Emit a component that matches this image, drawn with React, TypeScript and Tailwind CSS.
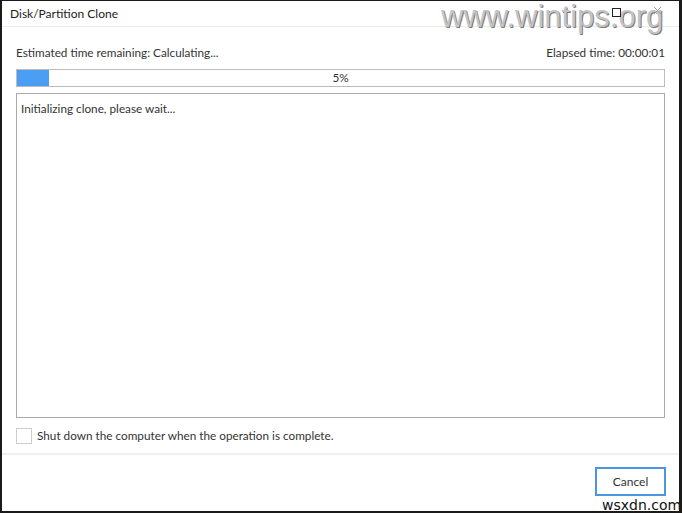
import React from 'react';

export default function App() {
    return (
        <div
            className="relative w-[682px] h-[513px] bg-white border-l-2 border-r-[3px] border-b-2 border-t border-[#1a1a1a] flex flex-col text-[#333] overflow-hidden"
            style={{ fontFamily: 'Lato, "Noto Sans", sans-serif' }}
        >
            {/* Title bar */}
            <div className="h-[26px] flex items-center pl-2 border-b border-[#ececec] text-[12px] text-[#222] shrink-0">
                Disk/Partition Clone
            </div>

            {/* Body */}
            <div className="flex-1 flex flex-col px-[14px] pt-[18px]">
                <div className="flex justify-between text-[11.75px] leading-[16px]">
                    <span>Estimated time remaining: Calculating...</span>
                    <span>Elapsed time: 00:00:01</span>
                </div>

                <div className="relative mt-[8px] h-[18px] border border-[#bcbcbc] bg-white">
                    <div className="absolute left-0 top-0 bottom-0 w-[32px] bg-[#4a9ff5]" />
                    <div className="absolute inset-0 flex items-center justify-center text-[11.75px]">5%</div>
                </div>

                <div className="mt-[6px] h-[325px] border border-[#aaaaaa] px-[4px] pt-[7px] text-[11.75px] leading-[16px]">
                    Initializing clone, please wait...
                </div>

                <label className="flex items-center gap-[5px] mt-[9px] text-[11.75px]">
                    <span className="w-[16px] h-[16px] border border-[#cfcfcf] bg-white" />
                    Shut down the computer when the operation is complete.
                </label>
            </div>

            {/* Footer */}
            <div className="h-[58px] border-t-2 border-[#f0f0f0] flex items-start justify-end pr-[13px] pt-[12px] shrink-0">
                <button className="w-[71px] h-[29px] border-2 border-[#4a97e0] bg-white text-[12px] text-[#333]">
                    Cancel
                </button>
            </div>

            {/* Watermarks */}
            <div
                className="absolute top-[0px] left-[439px] text-[31px] leading-[31px] text-[#c4c4c4]"
                style={{ fontFamily: '"Liberation Sans", Arial, sans-serif', textShadow: '1px 1px 0 #7a7a7a' }}
            >
                www.wintips.org
            </div>

            {/* Window controls under watermark */}
            <div className="absolute top-[7px] left-[610px] w-[9px] h-[9px] border border-[#222] bg-white" />
            <svg className="absolute top-[5px] left-[651px]" width="9" height="9" viewBox="0 0 9 9">
                <path d="M1 1 L8 8 M8 1 L1 8" stroke="#999" strokeWidth="1" />
            </svg>

            <div className="absolute top-[497px] left-[600px] text-[14px] leading-[14px] text-[#111]" style={{ fontFamily: '"DejaVu Sans", sans-serif' }}>
                wsxdn.com
            </div>
        </div>
    );
}
